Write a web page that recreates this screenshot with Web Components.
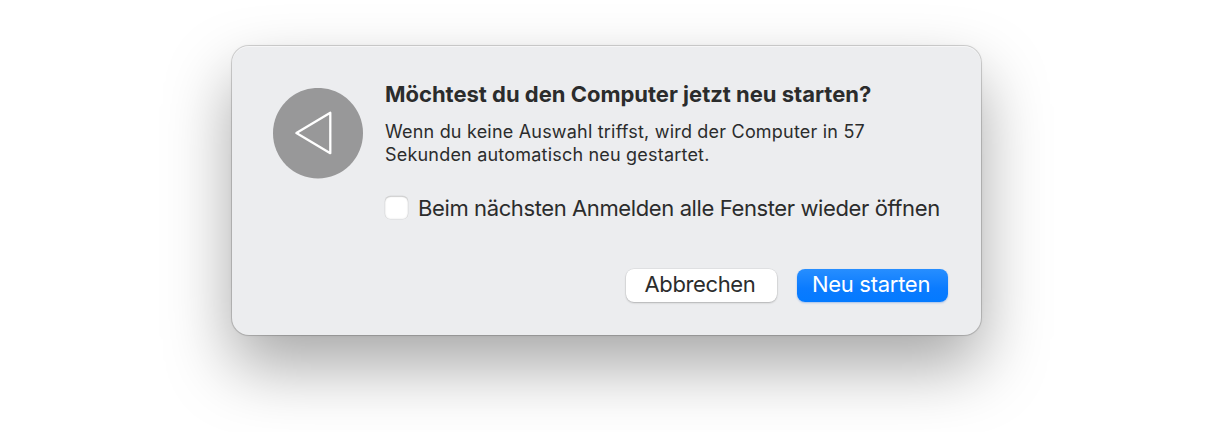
<!DOCTYPE html>
<html lang="de">
<head>
<meta charset="utf-8">
<title>Neu starten</title>
<style>
  body {
    margin: 0;
    height: 432px;
    overflow: hidden;
    background: #fff;
    color: #2b2c2c;
    font-family: Inter, "Liberation Sans", sans-serif;
  }
</style>
</head>
<body>
<alert-dialog>
  <restart-icon slot="icon"></restart-icon>
  <span slot="title">Möchtest du den Computer jetzt neu starten?</span>
  <span slot="message">Wenn du keine Auswahl triffst, wird der Computer in 57<br>Sekunden automatisch neu gestartet.</span>
  <check-option slot="option">Beim nächsten Anmelden alle Fenster wieder öffnen</check-option>
  <push-button slot="actions">Abbrechen</push-button>
  <push-button slot="actions" primary>Neu starten</push-button>
</alert-dialog>

<script>
class AlertDialog extends HTMLElement {
  constructor() {
    super();
    this.attachShadow({ mode: 'open' });
    this.shadowRoot.innerHTML = `
      <style>
        :host {
          display: flex;
          flex-direction: column;
          justify-content: space-between;
          box-sizing: border-box;
          width: 749px;
          height: 289px;
          margin: 46px 0 0 232px;
          padding: 36px 33px 33px 41px;
          border-radius: 17px;
          background: #ecedef;
          box-shadow:
            inset 0 1px 0 rgba(255, 255, 255, .5),
            0 0 0 1px rgba(0, 0, 0, .14),
            0 0 3px rgba(0, 0, 0, .1),
            0 31px 66px rgba(0, 0, 0, .35);
        }
        .content {
          display: flex;
          gap: 22px;
        }
        .icon { margin-top: 6px; }
        .text { white-space: nowrap; }
        h1 {
          margin: 0;
          font-size: 22px;
          line-height: 24px;
          font-weight: 700;
          letter-spacing: -0.01px;
        }
        p {
          margin: 14px 0 30px;
          font-size: 18px;
          line-height: 23px;
          letter-spacing: 0.2px;
        }
        .actions {
          display: flex;
          justify-content: flex-end;
          gap: 20px;
        }
      </style>
      <div class="content">
        <div class="icon"><slot name="icon"></slot></div>
        <div class="text">
          <h1><slot name="title"></slot></h1>
          <p><slot name="message"></slot></p>
          <slot name="option"></slot>
        </div>
      </div>
      <div class="actions"><slot name="actions"></slot></div>
    `;
  }
}

class RestartIcon extends HTMLElement {
  constructor() {
    super();
    this.attachShadow({ mode: 'open' });
    this.shadowRoot.innerHTML = `
      <style>
        :host { display: block; width: 90px; height: 91px; }
        svg { display: block; }
      </style>
      <svg width="90" height="91" viewBox="0 0 90 91">
        <ellipse cx="45" cy="45.2" rx="45" ry="45.3" fill="#989899"/>
        <path d="M57.3 24.8V65.2L23.4 45Z" fill="none" stroke="#fff" stroke-width="2.3" stroke-linejoin="round"/>
      </svg>
    `;
  }
}

class CheckOption extends HTMLElement {
  constructor() {
    super();
    this.attachShadow({ mode: 'open' });
    this.shadowRoot.innerHTML = `
      <style>
        :host { display: block; }
        label {
          display: flex;
          align-items: center;
          gap: 10px;
          height: 24px;
          font-size: 22px;
          line-height: 24px;
          letter-spacing: -0.39px;
        }
        input {
          appearance: none;
          flex: none;
          width: 23px;
          height: 23px;
          margin: -1px 0 0;
          border-radius: 5.5px;
          background: #fff;
          box-shadow:
            inset 0 1px 1px rgba(0, 0, 0, .16),
            inset 0 0 2px rgba(0, 0, 0, .12),
            0 0 0 .5px rgba(0, 0, 0, .08);
        }
      </style>
      <label><input type="checkbox"><span><slot></slot></span></label>
    `;
  }
}

class PushButton extends HTMLElement {
  constructor() {
    super();
    this.attachShadow({ mode: 'open' });
    this.shadowRoot.innerHTML = `
      <style>
        :host { display: block; }
        button {
          display: block;
          width: 151px;
          height: 33px;
          padding: 0 3px 2px 0;
          border: 0;
          border-radius: 8px;
          background: #fff;
          color: inherit;
          font: inherit;
          font-size: 22px;
          line-height: 31px;
          letter-spacing: -0.38px;
          box-shadow: 0 0 0 .5px rgba(0, 0, 0, .08), 0 1px 2px rgba(0, 0, 0, .22);
        }
        :host([primary]) button {
          background: linear-gradient(#278eff, #0a7bff 60%, #047aff);
          color: #fff;
          letter-spacing: -0.28px;
          box-shadow: 0 1px 2px rgba(0, 90, 220, .3);
        }
      </style>
      <button type="button"><slot></slot></button>
    `;
  }
}

customElements.define('alert-dialog', AlertDialog);
customElements.define('restart-icon', RestartIcon);
customElements.define('check-option', CheckOption);
customElements.define('push-button', PushButton);
</script>
</body>
</html>
